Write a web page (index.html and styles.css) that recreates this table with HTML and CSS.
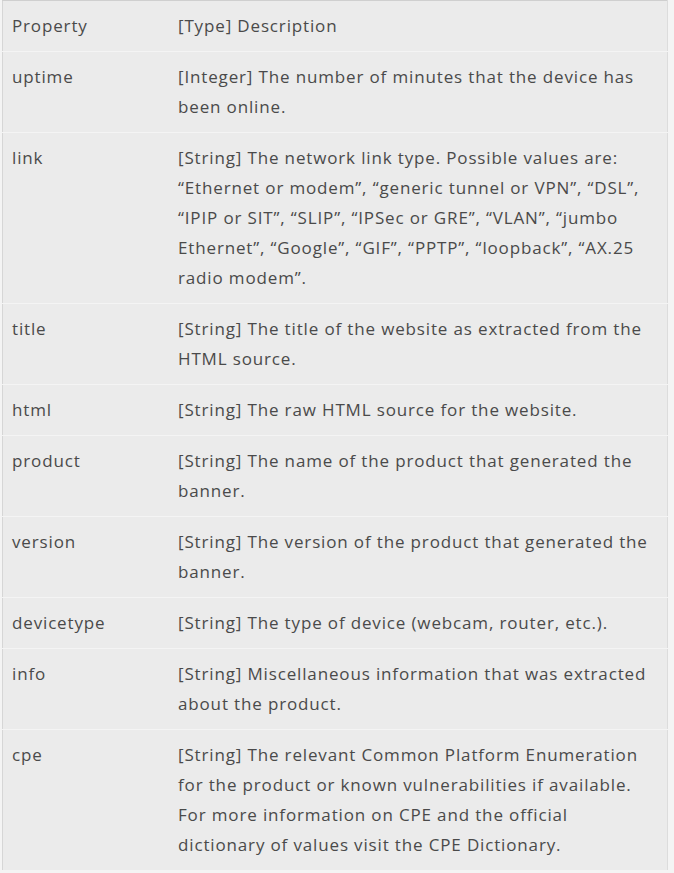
FILE: index.html
```html
<!DOCTYPE html>
<html lang="en">
<head>
    <meta charset="UTF-8">
    <title>Banner properties</title>
    <link rel="stylesheet" href="styles.css">
</head>
<body>
    <table class="props">
        <tr class="head">
            <td class="name">Property</td>
            <td class="desc">[Type] Description</td>
        </tr>
        <tr>
            <td class="name">uptime</td>
            <td class="desc">[Integer] The number of minutes that the device has been online.</td>
        </tr>
        <tr>
            <td class="name">link</td>
            <td class="desc">[String] The network link type. Possible values are: “Ethernet or modem”, “generic tunnel or VPN”, “DSL”, “IPIP or SIT”, “SLIP”, “IPSec or GRE”, “VLAN”, “jumbo Ethernet”, “Google”, “GIF”, “PPTP”, “loopback”, “AX.25 radio modem”.</td>
        </tr>
        <tr>
            <td class="name">title</td>
            <td class="desc">[String] The title of the website as extracted from the HTML source.</td>
        </tr>
        <tr>
            <td class="name">html</td>
            <td class="desc">[String] The raw HTML source for the website.</td>
        </tr>
        <tr>
            <td class="name">product</td>
            <td class="desc">[String] The name of the product that generated the banner.</td>
        </tr>
        <tr>
            <td class="name">version</td>
            <td class="desc">[String] The version of the product that generated the banner.</td>
        </tr>
        <tr>
            <td class="name">devicetype</td>
            <td class="desc">[String] The type of device (webcam, router, etc.).</td>
        </tr>
        <tr>
            <td class="name">info</td>
            <td class="desc">[String] Miscellaneous information that was extracted about the product.</td>
        </tr>
        <tr>
            <td class="name">cpe</td>
            <td class="desc">[String] The relevant Common Platform Enumeration for the product or known vulnerabilities if available. For more information on CPE and the official dictionary of values visit the CPE Dictionary.</td>
        </tr>
    </table>
</body>
</html>
```

FILE: styles.css
```css
body {
    margin: 0;
    padding: 0 0 0 2px;
    background-color: #f4f4f4;
    font-family: "Open Sans", sans-serif;
    color: #4a4a4a;
}
.props {
    width: 666px;
    border-collapse: collapse;
    background-color: #ebebeb;
    border-top: 1px solid #cfcfcf;
    border-left: 1px solid #d6d6d6;
    border-right: 1px solid #dcdcdc;
    font-size: 17px;
    line-height: 30px;
    letter-spacing: 0.85px;
}
.props td {
    vertical-align: top;
    padding: 10px 10px 10px 9px;
    border-bottom: 1px solid #f4f4f4;
}
.props .name {
    width: 146px;
}
.props .desc {
    padding-left: 10px;
    padding-right: 10px;
}
```
